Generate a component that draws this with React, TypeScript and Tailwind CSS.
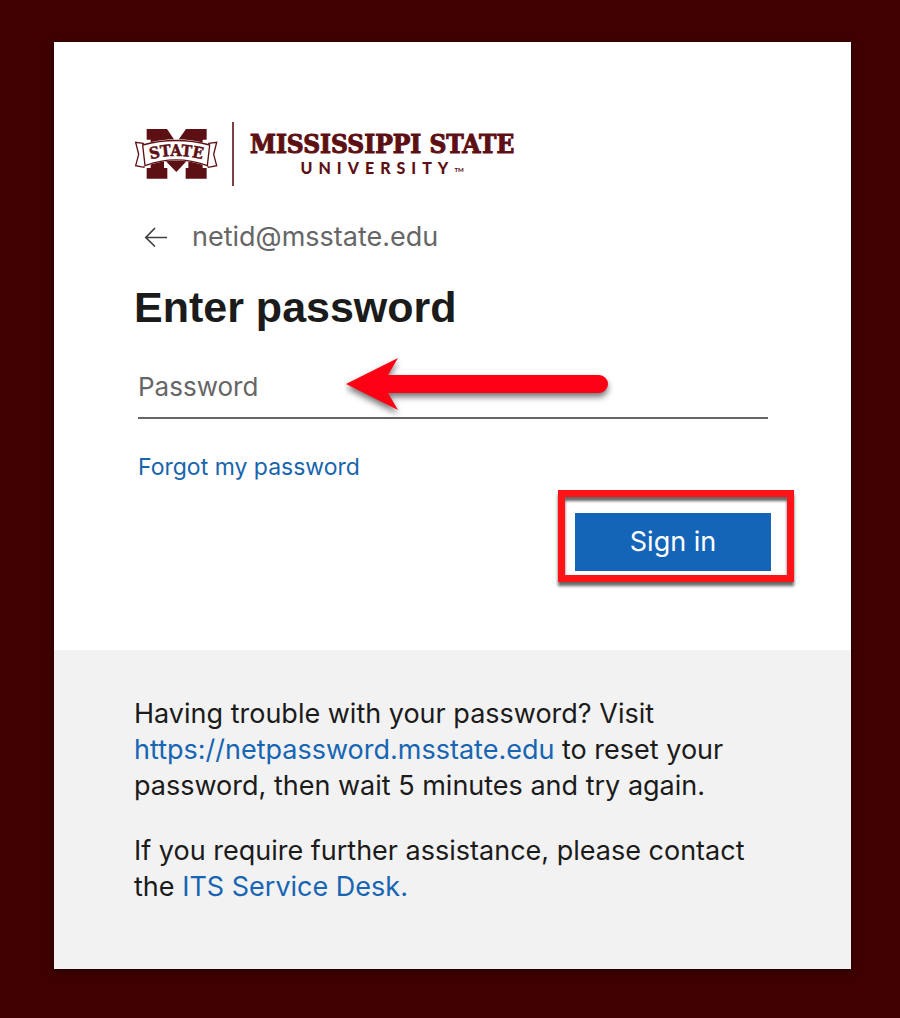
function Emblem() {
  return (
    <svg
      viewBox="24 42 252 168"
      className="h-14 w-21 shrink-0"
      role="img"
      aria-label="Mississippi State emblem"
    >
      <path
        fill="#5d1014"
        d="M62 51H123L151 92L180 51H242V83H230V168H242V200H179V168H187V142L151 180L114 142V168H124V200H62V168H74V83H62Z"
      />
      <g fill="#fff" stroke="#5d1014" strokeWidth="4" strokeLinejoin="miter">
        <path d="M52 94L29 91L38 127L29 161L54 166L60 150Z" />
        <path d="M248 94L272 91L263 127L272 161L247 166L240 150Z" />
        <path
          stroke="#fff"
          strokeWidth="9"
          d="M53 100Q150 72 248 100L243 158Q150 125 58 158Z"
        />
        <path d="M50 99Q150 72 251 99L244 161Q150 126 57 161Z" />
      </g>
      <path id="ribbon" fill="none" d="M62 145Q150 119 240 145" />
      <text
        fill="#5d1014"
        stroke="#5d1014"
        strokeWidth="1.5"
        fontFamily="'DejaVu Serif Condensed', 'DejaVu Serif', serif"
        fontSize="48"
        fontWeight="bold"
        textAnchor="middle"
      >
        <textPath href="#ribbon" startOffset="50%">
          STATE
        </textPath>
      </text>
    </svg>
  );
}

function Brand() {
  return (
    <div className="flex items-center text-[#5d1014]">
      <Emblem />
      <div className="ml-3.5 h-16 w-0.5 bg-[#7d4044]" />
      <div className="ml-4 flex flex-col items-center">
        <div className="font-['DejaVu_Serif_Condensed','DejaVu_Serif',serif] text-[26px] leading-7 font-bold whitespace-nowrap [-webkit-text-stroke:1px_#5d1014]">
          MISSISSIPPI STATE
        </div>
        <div className="flex items-end font-[Lato,sans-serif] text-[16px] leading-5 font-black">
          <span className="tracking-[6px]">UNIVERSITY</span>
          <span className="text-[6px] leading-4">TM</span>
        </div>
      </div>
    </div>
  );
}

function PointerArrow() {
  return (
    <svg
      viewBox="0 0 270 64"
      className="pointer-events-none absolute top-0 left-[211px] h-16 w-[270px]"
      aria-hidden="true"
    >
      <g className="drop-shadow-[0_4px_3px_rgba(0,0,0,0.55)]">
        <path
          fill="#fe0013"
          d="M1 29L53 3L43 20H254A9 9 0 0 1 254 38H43L53 55Z"
        />
      </g>
    </svg>
  );
}

export default function App() {
  return (
    <main className="min-h-screen bg-[#400001] pt-[42px] pr-[49px] pb-[49px] pl-[54px] font-[Inter,sans-serif] text-[#1b1b1b]">
      <div className="bg-white shadow-[0_2px_6px_rgba(0,0,0,0.5)]">
        <form
          className="px-20 pt-20 pb-[68px]"
          onSubmit={(event) => event.preventDefault()}
        >
          <Brand />

          <div className="mt-[33px] flex items-center gap-6 pl-2.5">
            <button type="button" aria-label="Back" className="h-6 w-6">
              <svg
                viewBox="0 0 24 24"
                className="h-6 w-6"
                fill="none"
                stroke="#404040"
                strokeWidth="1.7"
              >
                <path d="M23 12.500H2M11 3L1.800 12.500L11 21.500" />
              </svg>
            </button>
            <span className="text-[27px] leading-9 text-[#666]">
              netid@msstate.edu
            </span>
          </div>

          <h1 className="mt-7 font-['Liberation_Sans',Arial,sans-serif] text-[43px] leading-12 font-bold">
            Enter password
          </h1>

          <div className="relative mt-6 pr-[3px] pl-1">
            <input
              type="password"
              aria-label="Password"
              placeholder="Password"
              className="block h-16 w-full border-b-2 border-[#666] bg-transparent text-[26px] outline-none placeholder:text-[#666] placeholder:opacity-100"
            />
            <PointerArrow />
          </div>

          <a
            href="#forgot"
            className="mt-8 ml-1 inline-block text-[23px] leading-8 text-[#1765ad]"
          >
            Forgot my password
          </a>

          <div className="-mr-[23px] flex justify-end">
            <div className="mt-[7px] border-7 border-[#fe1417] pt-4 pr-4 pb-1 pl-2.5 shadow-[0_4px_3px_rgba(0,0,0,0.6),inset_0_4px_3px_rgba(0,0,0,0.6)]">
              <button
                type="submit"
                className="block h-[58px] w-[196px] bg-[#1465b7] text-[27px] text-white"
              >
                Sign in
              </button>
            </div>
          </div>
        </form>

        <footer className="bg-[#f2f2f2] px-20 pt-[46px] pb-16 text-[27px] leading-9">
          <p>
            Having trouble with your password? Visit{" "}
            <a href="https://netpassword.msstate.edu" className="text-[#1765b3]">
              https://netpassword.msstate.edu
            </a>{" "}
            to reset your password, then wait 5 minutes and try again.
          </p>
          <p className="mt-[29px]">
            If you require further assistance, please contact the{" "}
            <a href="#service-desk" className="text-[#1765b3]">
              ITS Service Desk.
            </a>
          </p>
        </footer>
      </div>
    </main>
  );
}
